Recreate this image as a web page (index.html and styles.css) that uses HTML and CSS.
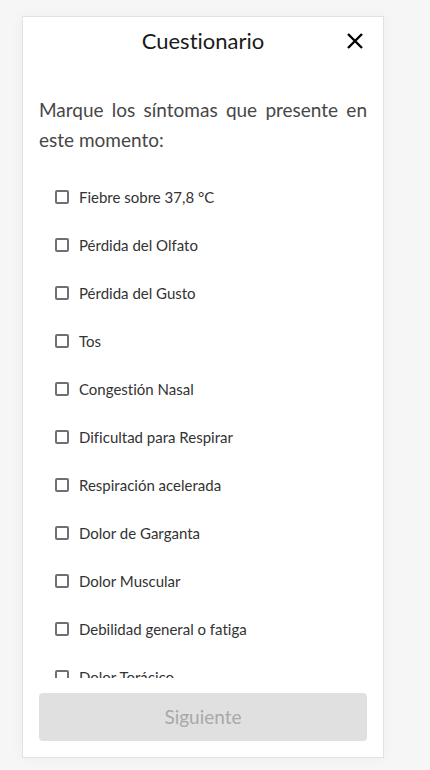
FILE: index.html
```html
<!DOCTYPE html>
<html lang="es">
<head>
<meta charset="utf-8">
<title>Cuestionario</title>
<link rel="stylesheet" href="styles.css">
</head>
<body>
<div class="card">
  <header class="head">
    <h1 class="title">Cuestionario</h1>
    <button class="close" aria-label="Cerrar">
      <svg width="18" height="18" viewBox="0 0 18 18"><path d="M2 2 L16 16 M16 2 L2 16" stroke="#000" stroke-width="2.4" fill="none"/></svg>
    </button>
  </header>
  <p class="intro">Marque los síntomas que presente en este momento:</p>
  <ul class="list">
    <li class="item"><span class="box"></span>Fiebre sobre 37,8 °C</li>
    <li class="item"><span class="box"></span>Pérdida del Olfato</li>
    <li class="item"><span class="box"></span>Pérdida del Gusto</li>
    <li class="item"><span class="box"></span>Tos</li>
    <li class="item"><span class="box"></span>Congestión Nasal</li>
    <li class="item"><span class="box"></span>Dificultad para Respirar</li>
    <li class="item"><span class="box"></span>Respiración acelerada</li>
    <li class="item"><span class="box"></span>Dolor de Garganta</li>
    <li class="item"><span class="box"></span>Dolor Muscular</li>
    <li class="item"><span class="box"></span>Debilidad general o fatiga</li>
    <li class="item"><span class="box"></span>Dolor Torácico</li>
    <li class="item"><span class="box"></span>Diarrea</li>
  </ul>
  <button class="next" disabled>Siguiente</button>
</div>
</body>
</html>
```
FILE: styles.css
```css
* { box-sizing: border-box; }
html, body { margin: 0; padding: 0; }
body {
  background: #f5f6f5;
  font-family: Lato, "Open Sans", sans-serif;
  font-variant-ligatures: none;
  padding-top: 16px;
  height: 770px;
  overflow: hidden;
}
.card {
  margin-left: 22px;
  width: 362px;
  height: 742px;
  background: #fff;
  border: 1px solid #e2e2e2;
  box-shadow: 0 0 14px rgba(0,0,0,0.04);
  display: flex;
  flex-direction: column;
  padding: 0 16px 16px 16px;
}
.head {
  height: 51px;
  display: flex;
  align-items: center;
  justify-content: center;
  position: relative;
  padding-bottom: 4px;
}
.title {
  margin: 0;
  font-weight: 400;
  font-size: 22px;
  color: #1a1a1a;
}
.close {
  position: absolute;
  right: 0;
  top: 12px;
  background: none;
  border: 0;
  padding: 0;
  width: 24px;
  height: 24px;
  display: flex;
  align-items: center;
  justify-content: center;
  cursor: pointer;
}
.intro {
  margin: 27px 0 0 0;
  font-size: 19px;
  line-height: 30px;
  color: #474747;
  text-align: justify;
}
.list {
  list-style: none;
  margin: 18px 0 0 0;
  padding: 0;
  flex: 1;
  min-height: 0;
  overflow: hidden;
}
.item {
  height: 48px;
  display: flex;
  align-items: center;
  padding-left: 16px;
  font-size: 15px;
  color: #333;
}
.box {
  width: 14px;
  height: 14px;
  border: 2px solid #707070;
  border-radius: 2px;
  margin-right: 10px;
  flex: none;
}
.next {
  margin-top: 15px;
  height: 48px;
  border: 0;
  border-radius: 4px;
  background: #e0e0e0;
  color: #a8a8a8;
  font-family: inherit;
  font-size: 19px;
  line-height: 48px;
  padding: 0;
  width: 100%;
}
```
